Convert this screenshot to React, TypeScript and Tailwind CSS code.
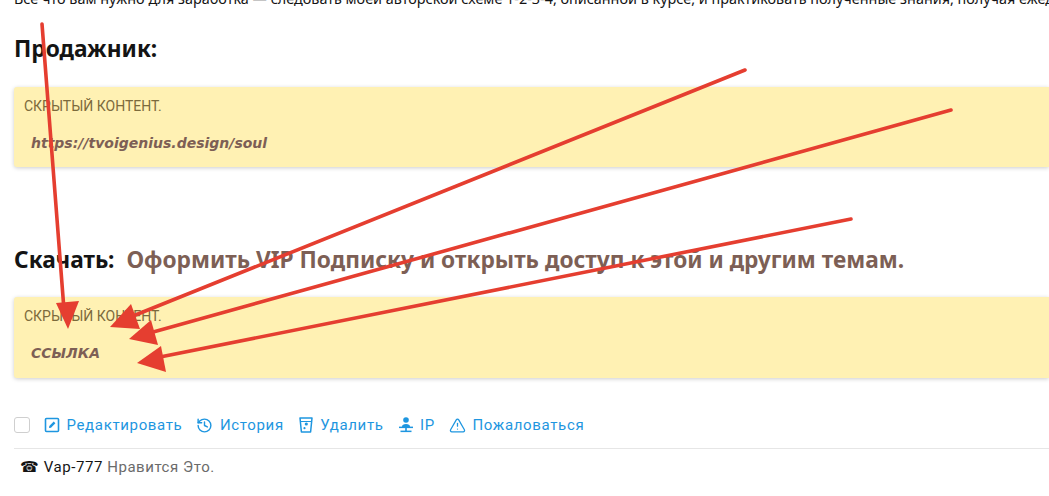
import React from 'react';
import { History, TriangleAlert } from 'lucide-react';

const roboto = "font-['Roboto',sans-serif]";
const verdana = "font-['DejaVu_Sans',sans-serif]";
const tahoma = "font-['Noto_Sans',sans-serif]";

const EditIcon = () => (
  <svg width="16" height="16" viewBox="0 0 16 16" className="text-[#1e96e0]">
    <rect x="1.5" y="1.5" width="13" height="13" rx="1" fill="none" stroke="currentColor" strokeWidth="1.6" />
    <path d="M5 11l.3-2 4.4-4.4 1.7 1.7L7 10.7z" fill="currentColor" />
  </svg>
);

const TrashIcon = () => (
  <svg width="16" height="16" viewBox="0 0 16 16" className="text-[#1e96e0]">
    <path d="M2 1h12l-1.4 14H3.4z" fill="none" stroke="currentColor" strokeWidth="1.5" strokeLinejoin="round" />
    <path d="M3 4.5h10" fill="none" stroke="currentColor" strokeWidth="1" />
    <circle cx="8.3" cy="7" r="1.6" fill="currentColor" />
    <circle cx="6.5" cy="11.2" r="1.1" fill="currentColor" />
  </svg>
);

const IpIcon = () => (
  <svg width="16" height="16" viewBox="0 0 16 16" className="text-[#1e96e0]">
    <circle cx="8" cy="3" r="2.8" fill="currentColor" />
    <path d="M4 9.5c0-1.5 1.5-2.5 4-2.5s4 1 4 2.5v1H4z" fill="currentColor" />
    <rect x="1" y="9.6" width="14" height="1.5" fill="currentColor" />
    <rect x="7.2" y="11" width="1.6" height="3" fill="currentColor" />
    <rect x="2.5" y="13.6" width="11" height="1.5" fill="currentColor" />
  </svg>
);

const actions = [
  { icon: <EditIcon />, label: 'Редактировать' },
  { icon: <History size={17} strokeWidth={2} className="text-[#1e96e0]" />, label: 'История' },
  { icon: <TrashIcon />, label: 'Удалить' },
  { icon: <IpIcon />, label: 'IP' },
  { icon: <TriangleAlert size={17} strokeWidth={1.8} className="text-[#1e96e0]" />, label: 'Пожаловаться' },
];

const arrows = [
  { line: '42,24 64,310', head: '68,329 56,303 79,301' },
  { line: '745,70 128,318', head: '110,327 131,304 140,329' },
  { line: '951,110 146,334', head: '129,339 151,320 158,345' },
  { line: '851,219 155,358', head: '137,363 161,346 166,372' },
];

const Hidden = ({ children, className }: { children: React.ReactNode; className: string }) => (
  <div className={`ml-[14px] rounded-l-[3px] bg-[#fff1b3] shadow-[0_1px_4px_rgba(0,0,0,0.2)] pl-[10px] ${className}`}>
    <div className={`${roboto} pt-[11px] text-[14px] leading-[16px] text-[#7c6a3c]`}>СКРЫТЫЙ КОНТЕНТ.</div>
    <div className={`${verdana} mt-[19px] pl-[7px] text-[14px] leading-[20px] font-bold italic text-[#7d5f55]`}>{children}</div>
  </div>
);

export default function App() {
  return (
    <div className="relative h-[496px] w-[1049px] overflow-hidden bg-white">
      <div className={`${tahoma} -mt-[11px] ml-[14px] h-[20px] text-[14.4px] leading-[20px] whitespace-nowrap text-[#141414]`}>
        Все что вам нужно для заработка — следовать моей авторской схеме 1-2-3-4, описанной в курсе, и практиковать полученные знания, получая ежедневный доход
      </div>

      <h2 className={`${tahoma} mt-[25px] ml-[14px] text-[22.7px] leading-[30px] font-bold text-[#141414]`}>Продажник:</h2>

      <Hidden className="mt-[23px] h-[80px]">https://tvoigenius.design/soul</Hidden>

      <div className={`${tahoma} mt-[76px] ml-[14px] flex items-baseline text-[22.7px] leading-[34px] font-bold`}>
        <span className="text-[#141414]">Скачать:</span>
        <span className="ml-[12px] text-[#7d5f55]">Оформить VIP Подписку и открыть доступ к этой и другим темам.</span>
      </div>

      <Hidden className="mt-[20px] h-[81px]">ССЫЛКА</Hidden>

      <div className={`${roboto} mt-[37px] ml-[14px] flex h-[20px] items-center text-[15px] tracking-[0.65px] text-[#1e96e0]`}>
        <div className="mr-[14px] h-[16px] w-[16px] rounded-[3px] border border-[#cfcfcf] bg-white" />
        <div className="flex items-center gap-[14px]">
          {actions.map((a) => (
            <div key={a.label} className="flex items-center gap-[6.5px]">
              {a.icon}
              <span>{a.label}</span>
            </div>
          ))}
        </div>
      </div>

      <div className={`${roboto} mt-[13px] ml-[14px] border-t border-[#e6e6e6] pt-[8px] pl-[6px] text-[15px] leading-[20px] tracking-[0.55px] text-[#6b6b6b]`}>
        <span className="text-[#141414]">☎ Vap-777</span> Нравится Это.
      </div>

      <svg className="pointer-events-none absolute inset-0" width="1049" height="496">
        {arrows.map((a) => (
          <g key={a.line}>
            <polyline points={a.line} fill="none" stroke="#e53e30" strokeWidth="3.6" strokeLinecap="round" />
            <polygon points={a.head} fill="#e53e30" />
          </g>
        ))}
      </svg>
    </div>
  );
}
